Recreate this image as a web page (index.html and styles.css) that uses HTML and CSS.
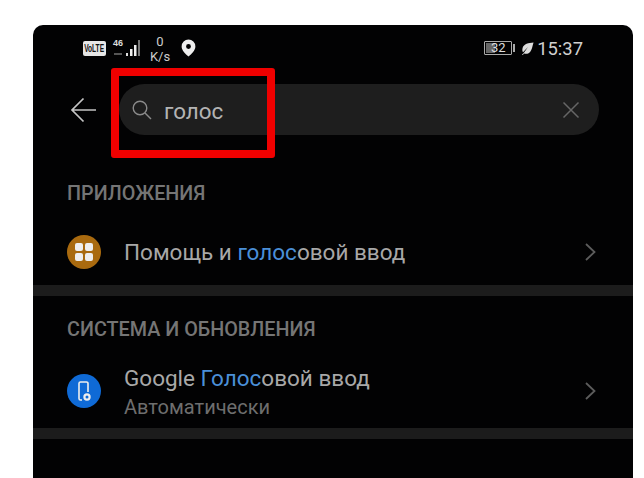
FILE: index.html
```html
<!DOCTYPE html>
<html lang="ru">
<head>
    <meta charset="UTF-8">
    <title>Настройки</title>
    <link rel="stylesheet" href="styles.css">
</head>
<body>
    <div class="phone">
        <!-- Status bar -->
        <div class="status-bar">
            <div class="status-left">
                <div class="volte"><span class="volte-text">VoLTE</span></div>
                <div class="signal">
                    <span class="signal-label">46</span>
                    <svg class="signal-bars" width="28" height="18" viewBox="0 0 28 18">
                        <path d="M1 15h8" stroke="#555" stroke-width="2"/>
                        <rect x="13" y="14" width="2" height="3" fill="#ddd"/>
                        <rect x="17" y="10" width="2.500" height="7" fill="#eee"/>
                        <rect x="21" y="6" width="2.500" height="11" fill="#eee"/>
                        <rect x="25" y="1" width="2" height="16" fill="#777"/>
                    </svg>
                </div>
                <div class="speed"><span>0</span><span>K/s</span></div>
                <svg width="15" height="18" viewBox="0 0 14 17">
                    <path fill-rule="evenodd" fill="#eee" d="M7 0.5a6.5 6.5 0 0 1 6.5 6.5c0 3.6-3.6 7-6.5 9.5C4.100 14 .5 10.600 .5 7A6.500 6.500 0 0 1 7 .5zM7 4.800a2.300 2.300 0 1 0 0 4.600a2.300 2.300 0 0 0 0-4.600z"/>
                </svg>
            </div>
            <div class="status-right">
                <div class="battery"><span class="battery-fill"></span><span class="battery-num">32</span></div>
                <span class="battery-tip"></span>
                <svg width="13" height="13" viewBox="0 0 14 14">
                    <path fill="#ddd" d="M13.500 .5C8 .8 3 1.800 1.700 6.500c-.5 1.900-.2 3.500.5 4.600L7.500 5.500 2.800 12 1 13.500l.8.5 1.700-1.700c1.800.7 4.500.5 6.300-1.600 2-2.500 2.600-6.500 3.700-10.200z"/>
                </svg>
                <span class="clock">15:37</span>
            </div>
        </div>

        <!-- Search -->
        <div class="search-row">
            <svg class="back" width="28" height="26" viewBox="0 0 28 26">
                <path d="M26 13H2M13.500 1.500L2 13l11.500 11.500" fill="none" stroke="#c4c4c4" stroke-width="1.700"/>
            </svg>
            <div class="search">
                <svg width="22" height="22" viewBox="0 0 22 22">
                    <circle cx="9" cy="9" r="6.800" fill="none" stroke="#8a8a8a" stroke-width="1.400"/>
                    <path d="M14 14l6 6" stroke="#8a8a8a" stroke-width="1.400"/>
                </svg>
                <span class="search-text">голос</span>
                <svg class="clear" width="18" height="18" viewBox="0 0 18 18">
                    <path d="M1.500 1.500l15 15M16.500 1.500l-15 15" stroke="#666" stroke-width="1.500"/>
                </svg>
            </div>
        </div>

        <!-- Приложения -->
        <div class="section-title first">ПРИЛОЖЕНИЯ</div>
        <div class="row row-single">
            <div class="icon icon-orange">
                <svg width="20" height="20" viewBox="0 0 20 20">
                    <rect x="1" y="1" width="8" height="8" rx="2" fill="#eee"/>
                    <rect x="11" y="1" width="8" height="8" rx="2" fill="#eee"/>
                    <rect x="1" y="11" width="8" height="8" rx="2" fill="#eee"/>
                    <rect x="11" y="11" width="8" height="8" rx="2" fill="#eee"/>
                </svg>
            </div>
            <div class="row-text">
                <div class="row-title">Помощь и <span class="hl">голос</span>овой ввод</div>
            </div>
            <svg class="chevron" width="11" height="18" viewBox="0 0 11 18">
                <path d="M1 1l8.500 8L1 17" fill="none" stroke="#5c5c5c" stroke-width="1.800"/>
            </svg>
        </div>
        <div class="divider"></div>

        <!-- Система и обновления -->
        <div class="section-title">СИСТЕМА И ОБНОВЛЕНИЯ</div>
        <div class="row row-double">
            <div class="icon icon-blue">
                <svg width="20" height="24" viewBox="0 0 20 24">
                    <path d="M8 21H6.500A1.500 1.500 0 0 1 5 19.500V4.500A1.500 1.500 0 0 1 6.500 3h6A1.500 1.500 0 0 1 14 4.500V13" fill="none" stroke="#eee" stroke-width="1.600"/>
                    <circle cx="13" cy="18" r="2.600" fill="none" stroke="#eee" stroke-width="2.200"/>
                </svg>
            </div>
            <div class="row-text shifted">
                <div class="row-title">Google <span class="hl">Голос</span>овой ввод</div>
                <div class="row-sub">Автоматически</div>
            </div>
            <svg class="chevron" width="11" height="18" viewBox="0 0 11 18">
                <path d="M1 1l8.500 8L1 17" fill="none" stroke="#5c5c5c" stroke-width="1.800"/>
            </svg>
        </div>
        <div class="divider"></div>

        <!-- Красная рамка -->
        <div class="red-box"></div>
    </div>
</body>
</html>
```

FILE: styles.css
```css
html, body {
    margin: 0;
    padding: 0;
    background-color: white;
}

body {
    font-family: Roboto, "Liberation Sans", sans-serif;
    height: 478px;
    overflow: hidden;
}

.phone {
    position: relative;
    box-sizing: border-box;
    width: 600px;
    height: 453px;
    margin: 25px 0 0 33px;
    background-color: #020203;
    border-radius: 10px 10px 0 0;
    overflow: hidden;
}

/* Status bar */
.status-bar {
    display: flex;
    justify-content: space-between;
    align-items: center;
    height: 46px;
    padding: 0 50px;
}

.status-left,
.status-right {
    display: flex;
    align-items: center;
}

.volte {
    display: flex;
    justify-content: center;
    width: 23px;
    background-color: #e6e6e6;
    border-radius: 2px;
}

.volte-text {
    flex: none;
    color: #111;
    font-family: "Liberation Sans", sans-serif;
    font-size: 10px;
    font-weight: bold;
    line-height: 15px;
    transform: scaleX(0.66);
    white-space: nowrap;
}

.signal {
    position: relative;
    width: 28px;
    height: 18px;
    margin-left: 7px;
}

.signal-label {
    position: absolute;
    left: 0;
    top: -1px;
    color: #ddd;
    font-family: "Liberation Sans", sans-serif;
    font-size: 9px;
    font-weight: bold;
    line-height: 10px;
}

.signal-bars {
    position: absolute;
    left: 0;
    top: 0;
}

.speed {
    display: flex;
    flex-direction: column;
    align-items: center;
    width: 24px;
    margin: 1px 9px 0 7px;
    color: #ccc;
    font-size: 13px;
    line-height: 15px;
}

.battery {
    position: relative;
    box-sizing: border-box;
    width: 28px;
    height: 14px;
    border: 1px solid #aaa;
    border-radius: 1px;
}

.battery-fill {
    position: absolute;
    left: 1px;
    top: 1px;
    width: 9px;
    height: 10px;
    background-color: #666;
}

.battery-num {
    position: absolute;
    left: 0;
    right: 0;
    top: -1px;
    text-align: center;
    color: #ddd;
    font-size: 13px;
    line-height: 14px;
}

.battery-tip {
    width: 2px;
    height: 8px;
    margin: 0 6px 0 1px;
    background-color: #aaa;
}

.clock {
    color: #d0d0d0;
    font-size: 18.400px;
    margin-left: 3px;
}

/* Search */
.search-row {
    display: flex;
    align-items: center;
    height: 51px;
    margin-top: 13px;
    padding: 0 34px 0 37px;
}

.back {
    flex: none;
    margin-right: 21px;
}

.search {
    flex: 1;
    display: flex;
    align-items: center;
    height: 51px;
    padding: 0 19px 0 12px;
    background-color: #1e1e1e;
    border-radius: 26px;
}

.search-text {
    flex: 1;
    margin: 2px 0 0 11px;
    color: #b4b4b4;
    font-size: 22.400px;
}

/* Lists */
.section-title {
    margin: 21px 0 0 34px;
    color: #757575;
    font-size: 19.800px;
    font-weight: 500;
    line-height: 26px;
}

.section-title.first {
    margin-top: 46px;
}

.row {
    display: flex;
    align-items: center;
    padding: 0 37px 0 34px;
}

.row-single {
    height: 67px;
    padding-top: 11px;
}

.row-double {
    height: 71px;
    padding-top: 12px;
    padding-bottom: 2px;
}

.icon {
    flex: none;
    display: flex;
    align-items: center;
    justify-content: center;
    width: 34px;
    height: 34px;
    border-radius: 50%;
}

.icon-orange {
    background-color: #a96a0f;
}

.icon-blue {
    background-color: #0f6ad6;
}

.row-text {
    flex: 1;
    margin-left: 23px;
}

.row-text.shifted {
    margin-top: 6px;
}

.row-title {
    color: #a8a8a8;
    font-size: 22.500px;
    line-height: 28px;
}

.row-sub {
    color: #6e6e6e;
    font-size: 20px;
    line-height: 31px;
}

.hl {
    color: #4a8fd8;
}

.divider {
    height: 11px;
    background-color: #1c1c1c;
}

/* Красная рамка поверх поиска */
.red-box {
    position: absolute;
    left: 78px;
    top: 43px;
    box-sizing: border-box;
    width: 164px;
    height: 90px;
    border: 8px solid #f00000;
    border-radius: 3px;
}
```
